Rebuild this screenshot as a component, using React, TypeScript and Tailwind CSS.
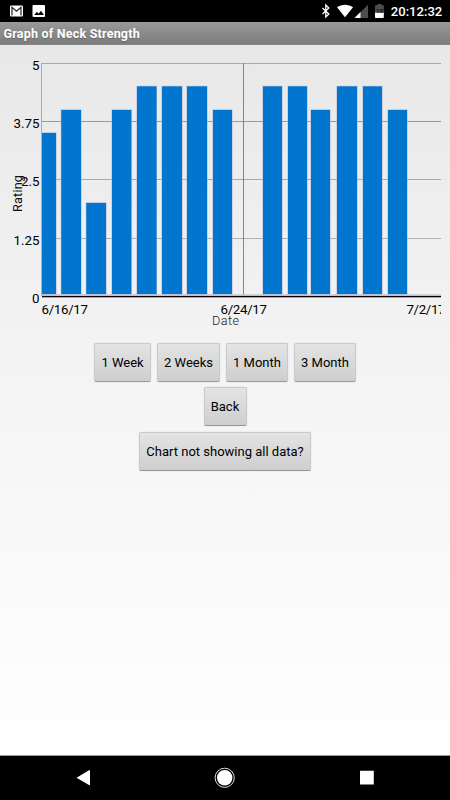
const bars = [
  { x: 42, width: 14, top: 133 },
  { x: 61.3, width: 19.7, top: 110 },
  { x: 86.3, width: 19.7, top: 203 },
  { x: 112, width: 19.3, top: 110 },
  { x: 137, width: 19.5, top: 86.4 },
  { x: 162, width: 20, top: 86.4 },
  { x: 187, width: 20, top: 86.4 },
  { x: 213, width: 19, top: 110 },
  { x: 263, width: 19, top: 86.4 },
  { x: 288, width: 19, top: 86.4 },
  { x: 311, width: 19, top: 110 },
  { x: 337, width: 20, top: 86.4 },
  { x: 363, width: 19, top: 86.4 },
  { x: 388, width: 19, top: 110 },
];

const gridLines = [
  { y: 63, label: "5", color: "#aaaaaa" },
  { y: 121, label: "3.75", color: "#999999" },
  { y: 179, label: "2.5", color: "#a8a8a8" },
  { y: 238, label: "1.25", color: "#b0b0b0" },
];

const ranges = [
  { label: "1 Week", width: "w-[57px]" },
  { label: "2 Weeks", width: "w-[63px]" },
  { label: "1 Month", width: "w-[62px]" },
  { label: "3 Month", width: "w-[62px]" },
];

function StatusBar() {
  return (
    <div className="flex h-[22px] items-center bg-black">
      <svg width="450" height="22" viewBox="0 0 450 22">
        {/* mail */}
        <rect x="10" y="5.5" width="13" height="11" rx="1" fill="#fff" />
        <path d="M12 15.5V7.3l4.5 3.9L21 7.3v8.2" fill="none" stroke="#222" strokeWidth="1.2" />
        {/* picture */}
        <rect x="32.5" y="5" width="12.5" height="12" rx="1" fill="#fff" />
        <path d="M34.2 15l2.7-3.3 1.7 2 2.4-3 3 4.3z" fill="#000" />
        {/* bluetooth */}
        <path
          d="M322.5 8l6.3 6-3 3V5l3 3-6.3 6"
          fill="none"
          stroke="#fff"
          strokeWidth="1.3"
        />
        {/* wifi */}
        <path d="M337 7.2c4.5-3.4 11.5-3.4 16 0L345 17.3z" fill="#fff" />
        {/* signal */}
        <path d="M354.5 18L368 4.8V18z" fill="#4d4d4d" />
        <path d="M354.5 18l6-6v6z" fill="#fff" />
        {/* battery */}
        <path d="M375 5.2h2.3V4h4.2v1.2h2.3V13H375z" fill="#4d4d4d" />
        <path d="M375 12.7h8.8v4.5q0 .8-.8.8h-7.2q-.8 0-.8-.8z" fill="#fff" />
        <text x="379.4" y="13" textAnchor="middle" fontSize="6" fontWeight="700" fill="#111">
          18
        </text>
        <text
          x="390.8"
          y="16"
          fontSize="13.3"
          fontWeight="500"
          fill="#fff"
          textLength="51.5"
          lengthAdjust="spacingAndGlyphs"
        >
          20:12:32
        </text>
      </svg>
    </div>
  );
}

function Chart() {
  return (
    <svg width="450" height="298" viewBox="0 45 450 298" className="block shrink-0">
      <defs>
        <clipPath id="plot">
          <rect x="0" y="45" width="441" height="298" />
        </clipPath>
      </defs>
      {gridLines.map((line) => (
        <g key={line.label}>
          <rect x="41" y={line.y} width="400" height="1" fill={line.color} />
          <text x="39.5" y={line.y + 7} textAnchor="end" fontSize="13.3">
            {line.label}
          </text>
        </g>
      ))}
      <text x="39.5" y="303" textAnchor="end" fontSize="13.3">
        0
      </text>
      <rect x="41" y="63" width="1" height="233" fill="#aaaaaa" />
      <rect x="243" y="63" width="1" height="233" fill="#858585" />
      {bars.map((bar) => (
        <g key={bar.x}>
          <rect
            x={bar.x - 0.5}
            y={bar.top - 0.6}
            width={bar.width + 1}
            height={295 - bar.top}
            fill="#a8b8dc"
          />
          <rect x={bar.x} y={bar.top} width={bar.width} height={294.3 - bar.top} fill="#0275ce" />
        </g>
      ))}
      <rect x="42" y="294.3" width="399" height="1.7" fill="#c5c1cb" />
      <rect x="42" y="296" width="399" height="1.3" fill="#080008" />
      <g clipPath="url(#plot)" fontSize="13.3">
        <text x="41.5" y="314" textLength="46.5">
          6/16/17
        </text>
        <text x="220.5" y="314" textLength="46.5">
          6/24/17
        </text>
        <text x="406.5" y="314" textLength="39">
          7/2/17
        </text>
      </g>
      <text x="212" y="325" fontSize="12.7" fontWeight="300" fill="#222" textLength="27">
        Date
      </text>
      <text
        transform="translate(22 212) rotate(-90)"
        fontSize="12.7"
        fill="#111"
        textLength="37"
      >
        Rating
      </text>
    </svg>
  );
}

function Button({ label, width }: { label: string; width: string }) {
  return (
    <button
      type="button"
      className={`${width} h-[39px] shrink-0 whitespace-nowrap rounded-[2px] border border-[#cacaca] border-b-[#999] bg-linear-to-b from-[#e4e4e4] to-[#cecece] text-center text-[13px] text-black shadow-[0_0_1px_#bbb]`}
    >
      {label}
    </button>
  );
}

function NavBar() {
  return (
    <div className="h-[45px] border-t border-[#929999] bg-black">
      <svg width="450" height="44" viewBox="0 756 450 44">
        <path d="M76.5 777.8L89 770.2q1-.5 1 .5v13.8q0 1-1 .5z" fill="#fff" />
        <circle cx="224.7" cy="777.8" r="9.6" fill="none" stroke="#ddd" strokeWidth="1" />
        <circle cx="224.7" cy="777.8" r="7.7" fill="#fff" />
        <rect x="360" y="770.7" width="13.8" height="13.8" rx="0.5" fill="#fff" />
      </svg>
    </div>
  );
}

export default function App() {
  return (
    <div className="flex h-[800px] w-[450px] flex-col overflow-hidden bg-black font-[Roboto,sans-serif]">
      <StatusBar />
      <div className="flex h-[23px] items-center border-b border-[#858585] bg-linear-to-b from-[#999] to-[#7d7d7d] pt-[2px] pl-[3.5px]">
        <h1 className="text-[12.5px] font-bold tracking-[0.21px] text-white [text-shadow:0_1px_1px_#666]">
          Graph of Neck Strength
        </h1>
      </div>
      <main className="flex h-[710px] flex-col bg-linear-to-b from-[#e8e8e8] via-[#f3f3f3] via-41% to-white">
        <Chart />
        <div className="flex flex-col items-center gap-[5.4px]">
          <div className="flex gap-[6px]">
            {ranges.map((range) => (
              <Button key={range.label} label={range.label} width={range.width} />
            ))}
          </div>
          <Button label="Back" width="w-[43px]" />
          <Button label="Chart not showing all data?" width="w-[172px]" />
        </div>
      </main>
      <NavBar />
    </div>
  );
}
